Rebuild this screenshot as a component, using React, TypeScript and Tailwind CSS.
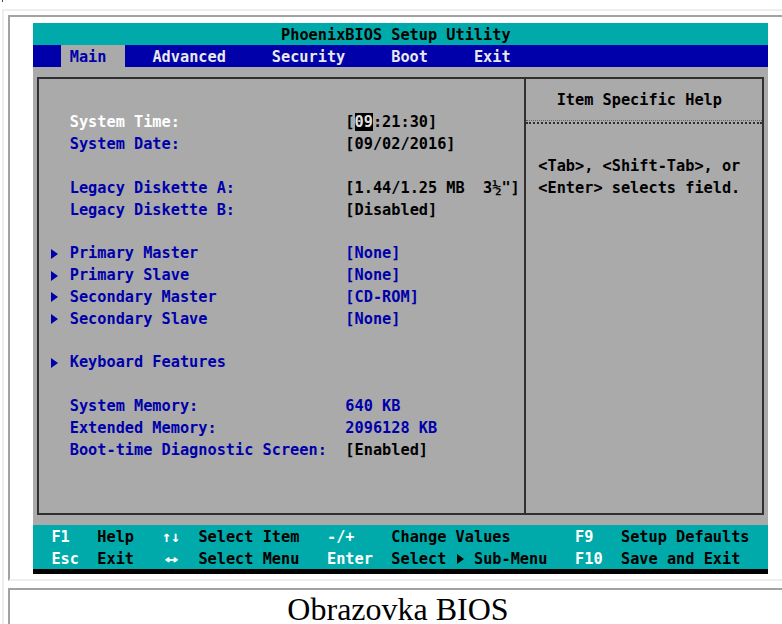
import * as React from 'react';

// 80x25 text-mode grid: one column is 9.1875px, one row 21.84px.
// Line height is a bit taller than the row so the glyphs sit lower in the cell.
const rowCls = 'h-[21.84px] leading-[25.6px]';

function Tri({ fill }: { fill: string }) {
  return (
    <svg width="7" height="10" viewBox="0 0 7 10" className="block">
      <polygon points="0,0 7,5 0,10" fill={fill} />
    </svg>
  );
}

function Item({
  label,
  value,
  arrow = false,
  labelTone = 'text-[#0000aa]',
  valueTone = 'text-[#0000aa]',
}: {
  label: string;
  value?: React.ReactNode;
  arrow?: boolean;
  labelTone?: string;
  valueTone?: string;
}) {
  return (
    <div className={`flex ${rowCls}`}>
      <span className="w-[27.5625px] flex items-center pl-[9.1875px] pt-[3px]">
        {arrow && <Tri fill="#0000aa" />}
      </span>
      <span className={`w-[275.625px] ${labelTone}`}>{label}</span>
      {value && <span className={valueTone}>{value}</span>}
    </div>
  );
}

function Blank() {
  return <div className={rowCls} />;
}

function Footer() {
  return (
    <div className="bg-[#00aaaa] pl-[18.375px]">
      <div className={`flex ${rowCls}`}>
        <span className="w-[45.9375px] text-white">F1</span>
        <span className="w-[64.3125px] text-black">Help</span>
        <span className="w-[36.75px] text-white">↑↓</span>
        <span className="w-[128.625px] text-black">Select Item</span>
        <span className="w-[64.3125px] text-white">-/+</span>
        <span className="w-[183.75px] text-black">Change Values</span>
        <span className="w-[45.9375px] text-white">F9</span>
        <span className="text-black">Setup Defaults</span>
      </div>
      <div className={`flex ${rowCls}`}>
        <span className="w-[45.9375px] text-white">Esc</span>
        <span className="w-[64.3125px] text-black">Exit</span>
        <span className="w-[36.75px] text-white">
          <span className="inline-block w-[18.375px] text-center scale-x-150">↔</span>
        </span>
        <span className="w-[128.625px] text-black">Select Menu</span>
        <span className="w-[64.3125px] text-white">Enter</span>
        <span className="w-[183.75px] text-black">
          {'Select '}
          <span className="inline-flex w-[9.1875px] h-[10px] justify-center">
            <Tri fill="#000000" />
          </span>
          {' Sub-Menu'}
        </span>
        <span className="w-[45.9375px] text-white">F10</span>
        <span className="text-black">Save and Exit</span>
      </div>
    </div>
  );
}

function SetupScreen() {
  return (
    <div className="w-[735px] bg-[#aaaaaa] font-['DejaVu_Sans_Mono',monospace] text-[15.26px] font-bold whitespace-pre">
      <div className={`${rowCls} bg-[#00aaaa] pl-[248.0625px] text-black`}>PhoenixBIOS Setup Utility</div>
      <div className={`${rowCls} flex bg-[#0000aa] pl-[27.5625px] text-[#e8e8e8]`}>
        <span className="w-[64.3125px] bg-[#aaaaaa] pl-[9.1875px] text-[#0000aa]">Main</span>
        <span className="ml-[27.5625px]">Advanced</span>
        <span className="ml-[45.9375px]">Security</span>
        <span className="ml-[45.9375px]">Boot</span>
        <span className="ml-[45.9375px]">Exit</span>
      </div>

      <div className="h-[458.64px] pt-[9.92px] pl-[3.59px]">
        <div className="flex w-[727.82px] h-[438.8px] border-2 border-[#303030]">
          <div className="w-[486.94px] border-r-2 border-[#303030] pt-[9.92px] pl-[3.6px]">
            <Blank />
            <Item
              label="System Time:"
              labelTone="text-white"
              valueTone="text-black"
              value={
                <>
                  [<span className="bg-black text-[#e0e0e0]">09</span>:21:30]
                </>
              }
            />
            <Item label="System Date:" valueTone="text-black" value="[09/02/2016]" />
            <Blank />
            <Item label="Legacy Diskette A:" valueTone="text-black" value={'[1.44/1.25 MB  3½"]'} />
            <Item label="Legacy Diskette B:" valueTone="text-black" value="[Disabled]" />
            <Blank />
            <Item arrow label="Primary Master" value="[None]" />
            <Item arrow label="Primary Slave" value="[None]" />
            <Item arrow label="Secondary Master" value="[CD-ROM]" />
            <Item arrow label="Secondary Slave" value="[None]" />
            <Blank />
            <Item arrow label="Keyboard Features" />
            <Blank />
            <Item label="System Memory:" value="640 KB" />
            <Item label="Extended Memory:" value="2096128 KB" />
            <Item label="Boot-time Diagnostic Screen:" valueTone="text-black" value="[Enabled]" />
          </div>

          <div className="flex-1 pt-[9.92px] text-black">
            <div className={`${rowCls} pl-[31.16px]`}>Item Specific Help</div>
            <div className="mt-[9.4px] mb-[8.44px] h-[4px] border-t border-dotted border-[#606060] border-b-2 border-b-solid border-b-[#303030]" />
            <Blank />
            <div className={`${rowCls} pl-[12.79px]`}>{'<Tab>, <Shift-Tab>, or'}</div>
            <div className={`${rowCls} pl-[12.79px]`}>{'<Enter> selects field.'}</div>
          </div>
        </div>
      </div>

      <Footer />
      <div className="h-[5px] bg-black" />
    </div>
  );
}

export default function App() {
  return (
    <div className="w-[782px] h-[624px] overflow-hidden bg-white">
      <div className="h-[2px] pl-[2px]">
        <div className="w-[1px] h-[2px] bg-[#444]" />
      </div>
      <div className="mt-[7px] ml-[2px] w-[800px] border-t-2 border-l-2 border-[#eeeeee] pl-[4px] pt-[4px]">
        <div className="w-[780px] border-2 border-t-[#a2a2a2] border-l-[#a2a2a2] border-b-[#eeeeee] border-r-[#eeeeee] pt-[6px] pl-[23px] pb-[5px]">
          <SetupScreen />
        </div>
        <div className="mt-[7px] w-[780px] border-2 border-t-[#a2a2a2] border-l-[#a2a2a2] border-b-[#eeeeee] border-r-[#eeeeee] pt-[4.7px] text-center font-['Liberation_Serif',serif] text-[32px] leading-[29px] text-black">
          Obrazovka BIOS
        </div>
      </div>
    </div>
  );
}
